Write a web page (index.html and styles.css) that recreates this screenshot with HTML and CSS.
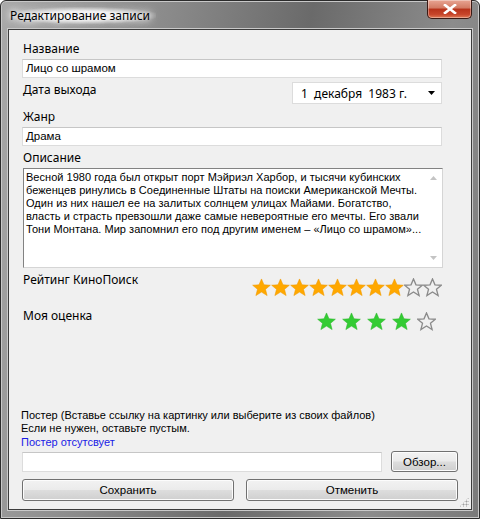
FILE: index.html
```html
<!DOCTYPE html>
<html lang="ru">
<head>
<meta charset="utf-8">
<title>Редактирование записи</title>
<link rel="stylesheet" href="styles.css">
</head>
<body>
<div class="window">
  <div class="titlebar">
    <span class="title">Редактирование записи</span>
    <div class="close"><svg width="14" height="10" viewBox="0 0 14 10"><path d="M2 1 L12 9 M12 1 L2 9" stroke="#fff" stroke-width="2.6" stroke-linecap="square"/></svg></div>
  </div>
  <div class="client">
    <div class="label first">Название</div>
    <div class="input">Лицо со шрамом</div>
    <div class="daterow">
      <div class="label">Дата выхода</div>
      <div class="date"><span>1&nbsp; декабря&nbsp; 1983 г.</span><svg width="7" height="4" viewBox="0 0 7 4"><path d="M0 0 H7 L3.5 4 Z" fill="#000"/></svg></div>
    </div>
    <div class="label gap5">Жанр</div>
    <div class="input">Драма</div>
    <div class="label gap4">Описание</div>
    <div class="memo">
      <div class="memotext">Весной 1980 года был открыт порт Мэйриэл Харбор, и тысячи кубинских<br>беженцев ринулись в Соединенные Штаты на поиски Американской Мечты.<br>Один из них нашел ее на залитых солнцем улицах Майами. Богатство,<br>власть и страсть превзошли даже самые невероятные его мечты. Его звали<br>Тони Монтана. Мир запомнил его под другим именем – «Лицо со шрамом»...</div>
      <div class="vscroll">
        <svg width="7" height="4" viewBox="0 0 7 4"><path d="M0 4 L3.5 0 L7 4 Z" fill="#c4c4c4"/></svg>
        <svg width="7" height="4" viewBox="0 0 7 4"><path d="M0 0 L3.5 4 L7 0 Z" fill="#c4c4c4"/></svg>
      </div>
    </div>
    <div class="ratingrow kp">
      <div class="label">Рейтинг КиноПоиск</div>
      <div class="stars orange">
        <svg viewBox="0 0 20 20" class="star"><polygon class="f" points="10,1 12.6,7.2 19.3,7.6 14.2,11.9 15.9,18.5 10,14.8 4.1,18.5 5.8,11.9 0.7,7.6 7.4,7.2"/></svg>
        <svg viewBox="0 0 20 20" class="star"><polygon class="f" points="10,1 12.6,7.2 19.3,7.6 14.2,11.9 15.9,18.5 10,14.8 4.1,18.5 5.8,11.9 0.7,7.6 7.4,7.2"/></svg>
        <svg viewBox="0 0 20 20" class="star"><polygon class="f" points="10,1 12.6,7.2 19.3,7.6 14.2,11.9 15.9,18.5 10,14.8 4.1,18.5 5.8,11.9 0.7,7.6 7.4,7.2"/></svg>
        <svg viewBox="0 0 20 20" class="star"><polygon class="f" points="10,1 12.6,7.2 19.3,7.6 14.2,11.9 15.9,18.5 10,14.8 4.1,18.5 5.8,11.9 0.7,7.6 7.4,7.2"/></svg>
        <svg viewBox="0 0 20 20" class="star"><polygon class="f" points="10,1 12.6,7.2 19.3,7.6 14.2,11.9 15.9,18.5 10,14.8 4.1,18.5 5.8,11.9 0.7,7.6 7.4,7.2"/></svg>
        <svg viewBox="0 0 20 20" class="star"><polygon class="f" points="10,1 12.6,7.2 19.3,7.6 14.2,11.9 15.9,18.5 10,14.8 4.1,18.5 5.8,11.9 0.7,7.6 7.4,7.2"/></svg>
        <svg viewBox="0 0 20 20" class="star"><polygon class="f" points="10,1 12.6,7.2 19.3,7.6 14.2,11.9 15.9,18.5 10,14.8 4.1,18.5 5.8,11.9 0.7,7.6 7.4,7.2"/></svg>
        <svg viewBox="0 0 20 20" class="star"><polygon class="f" points="10,1 12.6,7.2 19.3,7.6 14.2,11.9 15.9,18.5 10,14.8 4.1,18.5 5.8,11.9 0.7,7.6 7.4,7.2"/></svg>
        <svg viewBox="0 0 20 20" class="star"><polygon class="e" points="10,1 12.6,7.2 19.3,7.6 14.2,11.9 15.9,18.5 10,14.8 4.1,18.5 5.8,11.9 0.7,7.6 7.4,7.2"/></svg>
        <svg viewBox="0 0 20 20" class="star"><polygon class="e" points="10,1 12.6,7.2 19.3,7.6 14.2,11.9 15.9,18.5 10,14.8 4.1,18.5 5.8,11.9 0.7,7.6 7.4,7.2"/></svg>
      </div>
    </div>
    <div class="ratingrow my">
      <div class="label">Моя оценка</div>
      <div class="stars green">
        <svg viewBox="0 0 20 20" class="star"><polygon class="f" points="10,1 12.6,7.2 19.3,7.6 14.2,11.9 15.9,18.5 10,14.8 4.1,18.5 5.8,11.9 0.7,7.6 7.4,7.2"/></svg>
        <svg viewBox="0 0 20 20" class="star"><polygon class="f" points="10,1 12.6,7.2 19.3,7.6 14.2,11.9 15.9,18.5 10,14.8 4.1,18.5 5.8,11.9 0.7,7.6 7.4,7.2"/></svg>
        <svg viewBox="0 0 20 20" class="star"><polygon class="f" points="10,1 12.6,7.2 19.3,7.6 14.2,11.9 15.9,18.5 10,14.8 4.1,18.5 5.8,11.9 0.7,7.6 7.4,7.2"/></svg>
        <svg viewBox="0 0 20 20" class="star"><polygon class="f" points="10,1 12.6,7.2 19.3,7.6 14.2,11.9 15.9,18.5 10,14.8 4.1,18.5 5.8,11.9 0.7,7.6 7.4,7.2"/></svg>
        <svg viewBox="0 0 20 20" class="star"><polygon class="e" points="10,1 12.6,7.2 19.3,7.6 14.2,11.9 15.9,18.5 10,14.8 4.1,18.5 5.8,11.9 0.7,7.6 7.4,7.2"/></svg>
      </div>
    </div>
    <div class="spacer"></div>
    <div class="poster">
      <div>Постер (Вставье ссылку на картинку или выберите из своих файлов)</div>
      <div>Если не нужен, оставьте пустым.</div>
      <div class="link">Постер отсутсвует</div>
    </div>
    <div class="posterrow">
      <div class="input pinput"></div>
      <div class="btn browse">Обзор...</div>
    </div>
    <div class="btnrow">
      <div class="btn big">Сохранить</div>
      <div class="btn big">Отменить</div>
    </div>
    <div class="grip"></div>
  </div>
</div>
</body>
</html>
```
FILE: styles.css
```css
html, body {
  margin: 0;
  padding: 0;
  width: 480px;
  height: 519px;
  overflow: hidden;
  background: #fff;
}
.window {
  box-sizing: border-box;
  width: 480px;
  height: 519px;
  border: 1px solid #2b2b2b;
  border-radius: 6px 6px 0 0;
  background: linear-gradient(100deg, #a9a9a9 0%, #8a8a8a 30%, #6a6a6a 55%, #8c8c8c 80%, #7a7a7a 100%);
  box-shadow: inset 0 0 0 1px #c8c8c8;
  display: flex;
  flex-direction: column;
  padding: 0 7px 8px 7px;
}
.titlebar {
  height: 28px;
  flex: none;
  display: flex;
  align-items: flex-start;
  justify-content: space-between;
  position: relative;
}
.title {
  font-family: "Noto Sans", "Open Sans", sans-serif;
  font-size: 12px;
  color: #000;
  margin-top: 6px;
  margin-left: 1px;
  padding: 0 6px 0 1px;
  text-shadow: 0 0 6px #fff, 0 0 10px #fff, 0 0 14px #fff;
  background: radial-gradient(ellipse at center, rgba(255,255,255,0.85) 35%, rgba(255,255,255,0) 75%);
}
.close {
  width: 43px;
  height: 18px;
  margin-top: -1px;
  border: 1px solid #3a1a14;
  border-top: none;
  border-radius: 0 0 5px 5px;
  background: linear-gradient(#e8a593 0%, #d27a63 45%, #b7321a 50%, #c7452a 80%, #e07a55 100%);
  box-shadow: inset 0 0 0 1px rgba(255,255,255,0.35);
  display: flex;
  align-items: center;
  justify-content: center;
}
.client {
  flex: 1;
  background: #f0f0f0;
  border: 1px solid #3c3c3c;
  box-shadow: 0 0 0 1px #c9c9c9;
  display: flex;
  flex-direction: column;
  padding: 0 13px 8px 13px;
  position: relative;
}
.label {
  font-family: "Noto Sans", "Open Sans", sans-serif;
  font-size: 12px;
  line-height: 15px;
  height: 15px;
  color: #000;
  padding-left: 1px;
}
.label.first { margin-top: 11px; }
.gap5 { margin-top: 5px; }
.gap4 { margin-top: 4px; }
.input {
  box-sizing: border-box;
  height: 19px;
  margin-top: 3px;
  background: #fff;
  border: 1px solid #dcdcdc;
  border-top-color: #c6c6c6;
  font-family: "Liberation Sans", Arial, sans-serif;
  font-size: 11.5px;
  line-height: 17px;
  padding-left: 3px;
  color: #000;
  width: 420px;
}
.daterow {
  display: flex;
  justify-content: space-between;
  margin-top: 4px;
  width: 420px;
}
.date {
  box-sizing: border-box;
  width: 150px;
  height: 22px;
  background: #fff;
  border: 1px solid #dcdcdc;
  display: flex;
  align-items: center;
  justify-content: space-between;
  padding: 0 6px 0 8px;
  font-family: "Noto Sans", "Open Sans", sans-serif;
  font-size: 12px;
  color: #000;
}
.memo {
  box-sizing: border-box;
  margin-top: 3px;
  width: 420px;
  height: 100px;
  margin-left: 1px;
  background: #fff;
  border: 1px solid #828282;
  border-right-color: #d5d5d5;
  border-bottom-color: #d5d5d5;
  display: flex;
}
.memotext {
  flex: 1;
  min-width: 0;
  white-space: nowrap;
  font-family: "Liberation Sans", Arial, sans-serif;
  font-size: 11px;
  line-height: 13px;
  color: #000;
  padding: 2px 0 0 2px;
  letter-spacing: 0.03px;
}
.vscroll {
  width: 17px;
  flex: none;
  background: #fff;
  display: flex;
  flex-direction: column;
  justify-content: space-between;
  align-items: center;
  padding: 7px 0 7px 0;
  box-sizing: border-box;
}
.ratingrow {
  display: flex;
  justify-content: space-between;
  align-items: flex-start;
  width: 420px;
}
.kp { margin-top: 4px; }
.my { margin-top: 11px; }
.stars { display: flex; }
.kp .stars { margin-top: 6px; margin-left: 0; }
.my .stars { margin-top: 4px; margin-right: 6px; gap: 6px; }
.star { width: 19px; height: 19px; display: block; }
.orange .f { fill: #ffa800; stroke: #f09a00; stroke-width: 0.6; }
.green .f { fill: #33cc33; stroke: #2cb82c; stroke-width: 0.6; }
.e { fill: none; stroke: #8a8a8a; stroke-width: 1.4; }
.spacer { flex: 1; }
.poster {
  font-family: "Liberation Sans", Arial, sans-serif;
  font-size: 11px;
  line-height: 13.5px;
  color: #000;
  margin-left: -1px;
}
.link { color: #1a1ae6; }
.posterrow {
  display: flex;
  justify-content: space-between;
  align-items: center;
  margin-top: 2px;
  width: 436px;
}
.pinput {
  width: 360px;
  height: 20px;
  margin-top: 0;
}
.btn {
  box-sizing: border-box;
  border: 1px solid #707070;
  border-radius: 3px;
  background: linear-gradient(#f2f2f2 0%, #ebebeb 48%, #dddddd 52%, #cfcfcf 100%);
  box-shadow: inset 0 0 0 1px #fcfcfc;
  font-family: "Liberation Sans", Arial, sans-serif;
  font-size: 11.5px;
  color: #000;
  display: flex;
  align-items: center;
  justify-content: center;
}
.browse {
  width: 67px;
  height: 21px;
}
.btnrow {
  display: flex;
  justify-content: space-between;
  margin-top: 7px;
  width: 436px;
}
.big {
  width: 212px;
  height: 22px;
}
.grip {
  position: absolute;
  right: 2px;
  bottom: 2px;
  width: 10px;
  height: 10px;
  background:
    radial-gradient(circle, #a0a0a0 0.8px, transparent 1.2px) 0 0 / 3px 3px;
  clip-path: polygon(100% 0, 100% 100%, 0 100%);
}
```
